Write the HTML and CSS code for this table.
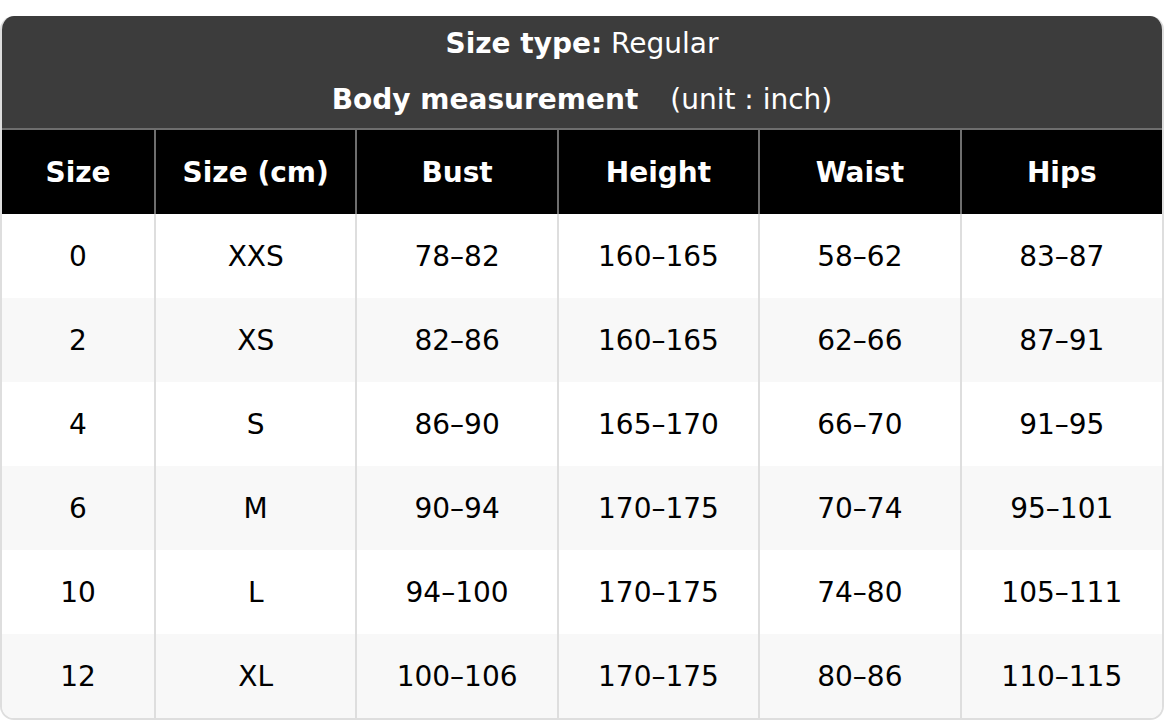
FILE: index.html
```html
<!DOCTYPE html>
<html>
<head>
<meta charset="utf-8">
<link rel="stylesheet" href="styles.css">
</head>
<body>
<div class="chart">
  <div class="chart-head">
    <div class="head-line"><b>Size type:</b> Regular</div>
    <div class="head-line"><b>Body measurement</b><span class="unit">(unit : inch)</span></div>
  </div>
  <table class="size-table">
    <colgroup>
      <col class="c-first"><col class="c"><col class="c"><col class="c"><col class="c"><col class="c">
    </colgroup>
    <thead>
      <tr><th>Size</th><th>Size (cm)</th><th>Bust</th><th>Height</th><th>Waist</th><th>Hips</th></tr>
    </thead>
    <tbody>
      <tr><td>0</td><td>XXS</td><td>78–82</td><td>160–165</td><td>58–62</td><td>83–87</td></tr>
      <tr><td>2</td><td>XS</td><td>82–86</td><td>160–165</td><td>62–66</td><td>87–91</td></tr>
      <tr><td>4</td><td>S</td><td>86–90</td><td>165–170</td><td>66–70</td><td>91–95</td></tr>
      <tr><td>6</td><td>M</td><td>90–94</td><td>170–175</td><td>70–74</td><td>95–101</td></tr>
      <tr><td>10</td><td>L</td><td>94–100</td><td>170–175</td><td>74–80</td><td>105–111</td></tr>
      <tr><td>12</td><td>XL</td><td>100–106</td><td>170–175</td><td>80–86</td><td>110–115</td></tr>
    </tbody>
  </table>
</div>
</body>
</html>
```

FILE: styles.css
```css
html, body {
  margin: 0;
  padding: 0;
  background: #fff;
}
body {
  padding-top: 16px;
  font-family: "DejaVu Sans", Verdana, sans-serif;
  font-size: 28px;
  color: #000;
}
.chart {
  width: 1164px;
  box-sizing: border-box;
  border: 2px solid #dedede;
  border-top: none;
  border-radius: 14px;
  overflow: hidden;
}
.chart-head {
  background: #3c3c3c;
  color: #fff;
  text-align: center;
  border-bottom: 2px solid #6e6e6e;
  margin: 0 -2px;
}
.head-line {
  height: 56px;
  line-height: 56px;
}
.head-line b {
  font-weight: bold;
}
.unit {
  margin-left: 32px;
}
.size-table {
  width: 100%;
  border-collapse: collapse;
  table-layout: fixed;
}
.c-first {
  width: 153px;
}
.size-table th {
  background: #000;
  color: #fff;
  font-weight: bold;
  height: 84px;
  padding: 0;
  border-left: 2px solid #6e6e6e;
  vertical-align: middle;
}
.size-table td {
  height: 84px;
  padding: 0;
  text-align: center;
  vertical-align: middle;
  border-left: 2px solid #dedede;
}
.size-table th:first-child,
.size-table td:first-child {
  border-left: none;
}
.size-table tbody tr:nth-child(even) td {
  background: #f8f8f8;
}
```
